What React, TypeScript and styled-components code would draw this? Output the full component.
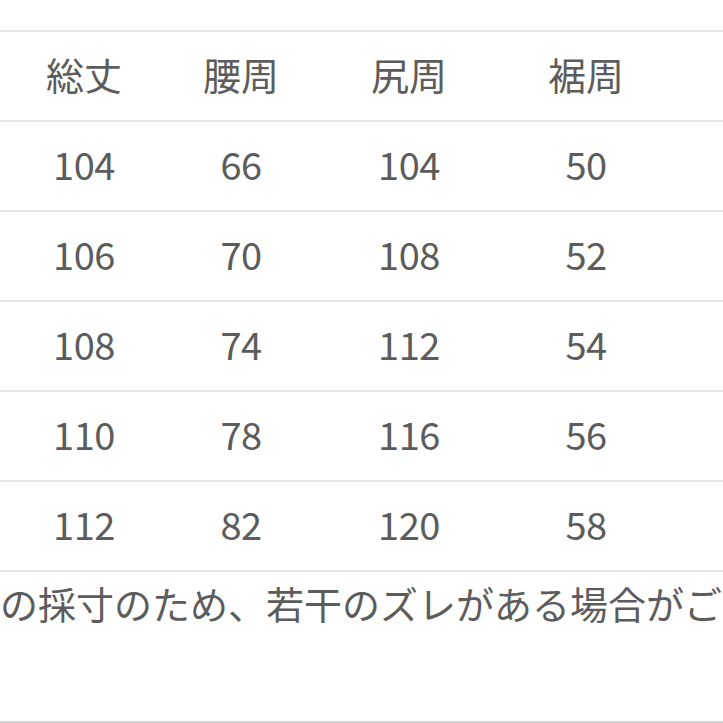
import styled, { createGlobalStyle } from "styled-components";

const GlobalStyle = createGlobalStyle`
  html, body {
    margin: 0;
    padding: 0;
    background: #ffffff;
  }
  body {
    font-family: "Noto Sans CJK JP", "Noto Sans", sans-serif;
    color: #5c5c5c;
  }
`;

const Page = styled.main`
  width: 723px;
  height: 723px;
  overflow: hidden;
  padding-top: 30px;
  box-sizing: border-box;
  display: flex;
  flex-direction: column;
`;

const Row = styled.div`
  display: grid;
  grid-template-columns: 168px 146px 190px 164px 1fr;
  align-items: center;
  height: 90px;
  padding-bottom: 4px;
  border-top: 2px solid #e6e6e6;
  box-sizing: border-box;
`;

const Cell = styled.div<{ $head?: boolean }>`
  text-align: center;
  font-size: 38px;
  line-height: 1;
  letter-spacing: ${(p) => (p.$head ? "0" : "-0.5px")};
`;

const Note = styled.div`
  flex: 1;
  border-top: 2px solid #e6e6e6;
  border-bottom: 2px solid #d4d4d4;
  box-sizing: border-box;
  padding-top: 12px;
  font-size: 38px;
  line-height: 1;
  white-space: nowrap;
  overflow: hidden;
`;

const headers = ["総丈", "腰周", "尻周", "裾周"];

const rows = [
  [104, 66, 104, 50],
  [106, 70, 108, 52],
  [108, 74, 112, 54],
  [110, 78, 116, 56],
  [112, 82, 120, 58],
];

const App = () => {
  return (
    <>
      <GlobalStyle />
      <Page>
        <Row>
          {headers.map((h) => (
            <Cell key={h} $head>
              {h}
            </Cell>
          ))}
          <Cell />
        </Row>
        {rows.map((r, i) => (
          <Row key={i}>
            {r.map((v, j) => (
              <Cell key={j}>{v}</Cell>
            ))}
            <Cell />
          </Row>
        ))}
        <Note>の採寸のため、若干のズレがある場合がご</Note>
      </Page>
    </>
  );
};

export default App;
